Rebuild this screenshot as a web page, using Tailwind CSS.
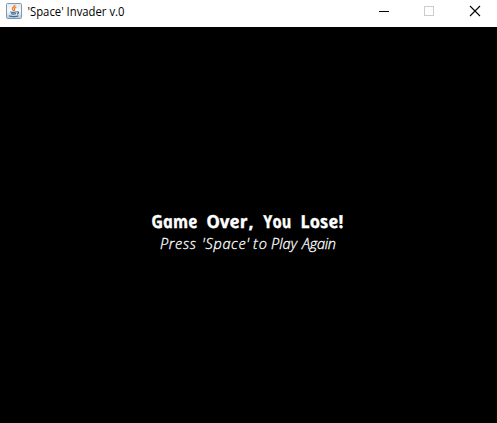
<!DOCTYPE html>
<html lang="en">
<head>
<meta charset="utf-8">
<title>'Space' Invader v.0</title>
<script src="https://cdn.jsdelivr.net/npm/@tailwindcss/browser@4"></script>
</head>
<body class="flex h-screen flex-col overflow-hidden bg-black">
<header class="flex h-[27px] shrink-0 items-start bg-white">
  <svg class="mt-[3px] ml-[6px] h-4 w-4" viewBox="0 0 16 16" fill="none">
    <defs><linearGradient id="g" x1="0" y1="0" x2="0" y2="1"><stop stop-color="#e0e8f0"/><stop offset=".5" stop-color="#f8fafc"/><stop offset="1" stop-color="#b4c8dc"/></linearGradient></defs>
    <rect x=".5" y=".5" width="15" height="15" rx="1" fill="url(#g)" stroke="#8297ae"/>
    <path d="M8.900 1.800C9.300 3.400 6 4.200 6.400 6c.1.7.9 1.200 1.200 2M10.300 4C8.700 4.600 8 5.300 8.500 6.200c.3.6.2 1-.2 1.600" stroke="#ee7c22" stroke-width="1.300"/>
    <path d="M4.300 8.700c1.500.7 4.500.7 6.200 0M5 10.500c1.400.6 3.600.6 5 0M10.800 8.800c2.200-.4 2.200 1.600.3 2.300M3 12.700c2 1.200 7.500 1.200 9.500.1" stroke="#3f6d96" stroke-width="1.200"/>
  </svg>
  <svg class="h-[27px] w-[110px] overflow-visible" viewBox="0 0 110 27">
    <text x="5.500" y="16" textLength="97" lengthAdjust="spacingAndGlyphs" class="fill-black font-['Segoe_UI','Open_Sans',sans-serif] text-[12px]">'Space' Invader v.0</text>
  </svg>
  <div class="ml-auto flex">
    <svg class="h-[27px] w-[46px]" viewBox="0 0 46 27" shape-rendering="crispEdges"><path d="M18 11.500h10" stroke="#000"/></svg>
    <svg class="h-[27px] w-[45px]" viewBox="0 0 45 27" shape-rendering="crispEdges"><path d="M17.500 6.500h9v9h-9z" fill="none" stroke="#ccc"/></svg>
    <svg class="h-[27px] w-[45px]" viewBox="0 0 45 27"><path d="M18 6l10 10M28 6L18 16" stroke="#000" stroke-width="1.100"/></svg>
  </div>
</header>
<main class="flex flex-1 flex-col items-start bg-black pt-[183px]">
  <!-- Counter-skewed italics give upright letters with a single-storey "a" -->
  <svg class="h-[26px] w-full overflow-visible fill-white stroke-white stroke-[0.3px] font-['Open_Sans',sans-serif] text-[18px] font-bold italic" viewBox="0 0 497 26">
    <g transform="translate(1.5 18) skewX(12)"><text y="0"><tspan x="151" textLength="46" lengthAdjust="spacingAndGlyphs">Game</tspan> <tspan x="206" textLength="41" lengthAdjust="spacingAndGlyphs">Over</tspan><tspan x="248">,</tspan> <tspan x="263" textLength="28" lengthAdjust="spacingAndGlyphs">You</tspan> <tspan x="300" textLength="43" lengthAdjust="spacingAndGlyphs">Lose!</tspan></text></g>
  </svg>
  <svg class="h-[24px] w-full overflow-visible fill-white stroke-white stroke-[0.3px] font-['Open_Sans',sans-serif] text-[14.500px] font-light italic" viewBox="0 0 497 24">
    <text y="13"><tspan x="160" textLength="36">Press</tspan> <tspan x="202" textLength="47">'Space'</tspan> <tspan x="253" textLength="14">to</tspan> <tspan x="271" textLength="26">Play</tspan> <tspan x="302" textLength="34">Again</tspan></text>
  </svg>
</main>
</body>
</html>
